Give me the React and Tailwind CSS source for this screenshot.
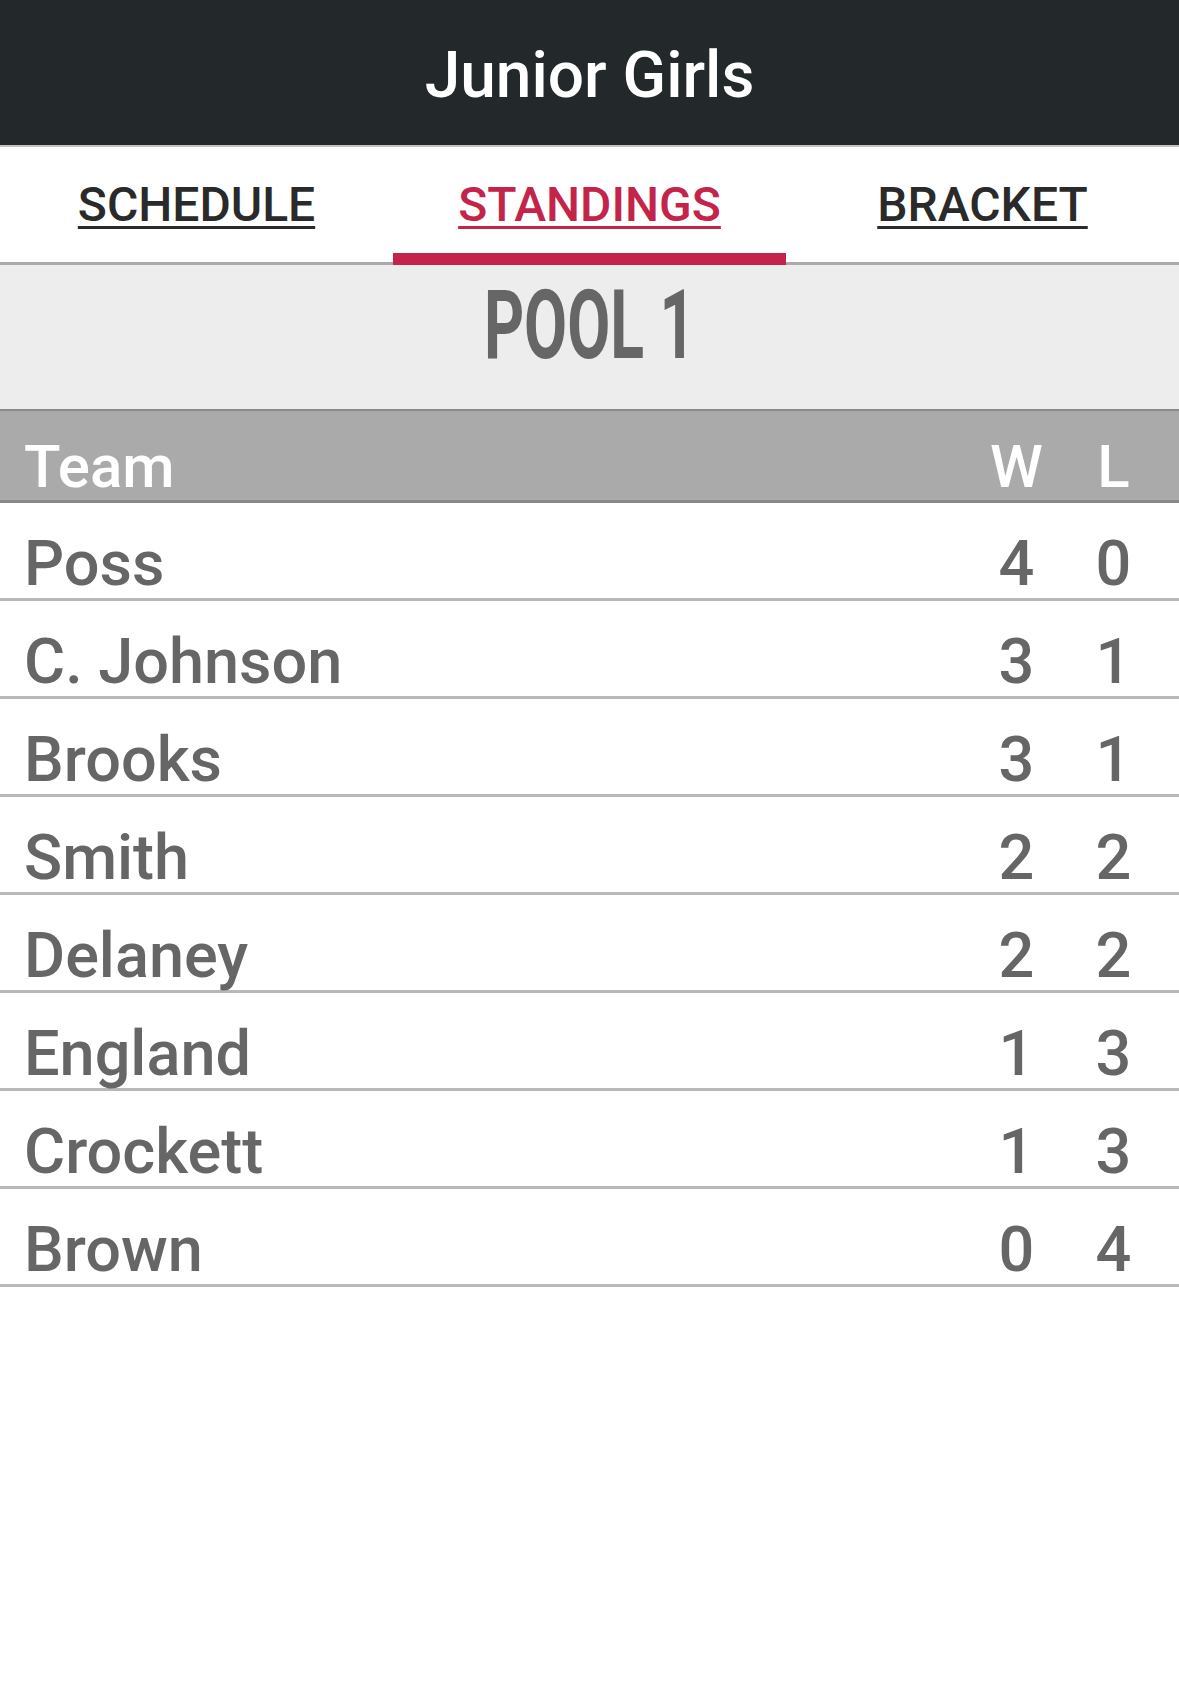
import React from 'react';

const teams = [
  { name: 'Poss', w: 4, l: 0 },
  { name: 'C. Johnson', w: 3, l: 1 },
  { name: 'Brooks', w: 3, l: 1 },
  { name: 'Smith', w: 2, l: 2 },
  { name: 'Delaney', w: 2, l: 2 },
  { name: 'England', w: 1, l: 3 },
  { name: 'Crockett', w: 1, l: 3 },
  { name: 'Brown', w: 0, l: 4 },
];

const tabs = ['SCHEDULE', 'STANDINGS', 'BRACKET'];

const App = () => {
  const active = 'STANDINGS';

  return (
    <div className="min-h-[1684px] bg-white font-[Roboto,sans-serif]">
      {/* Top bar */}
      <header className="h-[147px] bg-[#23282b] border-b-2 border-[#c4c4c4] flex items-center justify-center">
        <h1 className="text-[64px] leading-none font-medium text-white mt-[7px]">Junior Girls</h1>
      </header>

      {/* Tabs */}
      <nav className="grid grid-cols-3 border-b-[3px] border-[#aaaaaa]">
        {tabs.map((tab) => (
          <div key={tab} className="relative h-[115px] flex items-center justify-center">
            <span
              className={`text-[48px] leading-none font-medium underline decoration-[3px] underline-offset-[5px] ${
                tab === active ? 'text-[#c4244a]' : 'text-[#2a2a2a]'
              }`}
            >
              {tab}
            </span>
            {tab === active && (
              <span className="absolute left-0 right-0 -bottom-[3px] h-[12px] bg-[#c4244a]" />
            )}
          </div>
        ))}
      </nav>

      {/* Pool title */}
      <div className="h-[146px] bg-[#ededed] border-b-[2px] border-[#8a8a8a] flex justify-center pt-[12px]">
        <span className="inline-block text-[96px] leading-none font-bold text-[#666666] scale-x-[0.65]">
          POOL 1
        </span>
      </div>

      {/* Table header */}
      <div className="h-[92px] bg-[#aaaaaa] border-b-[3px] border-[#888888] flex items-end pb-[3px] pl-[24px] pr-[17px] text-white text-[60px] leading-none font-medium">
        <div className="flex-1">Team</div>
        <div className="w-[97px] text-center">W</div>
        <div className="w-[97px] text-center">L</div>
      </div>

      {/* Rows */}
      {teams.map((t) => (
        <div
          key={t.name}
          className="h-[98px] border-b-[3px] border-[#b8b8b8] flex items-start pt-[29px] pl-[24px] pr-[17px] text-[#666666] text-[63px] leading-none font-medium"
        >
          <div className="flex-1">{t.name}</div>
          <div className="w-[97px] text-center">{t.w}</div>
          <div className="w-[97px] text-center">{t.l}</div>
        </div>
      ))}
    </div>
  );
};

export default App;
